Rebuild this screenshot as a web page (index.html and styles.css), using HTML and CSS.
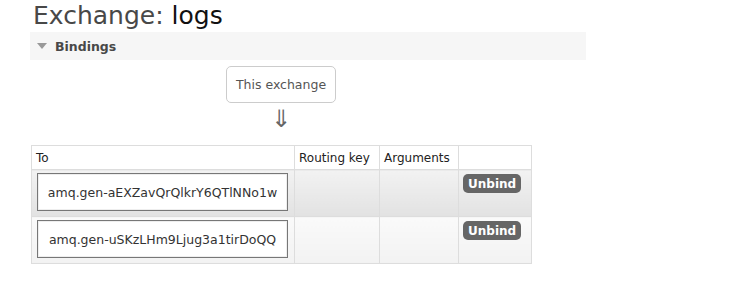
FILE: index.html
```html
<!DOCTYPE html>
<html>
<head>
<meta charset="utf-8">
<link rel="stylesheet" href="styles.css">
</head>
<body>
<div class="page">
  <h1 class="title">Exchange: <b>logs</b></h1>
  <div class="section">
    <div class="section-head"><span class="tri"></span>Bindings</div>
    <div class="section-body">
      <div class="source">
        <span class="this-ex">This exchange</span>
        <span class="arrow">⇓</span>
      </div>
      <table class="bindings">
        <colgroup>
          <col class="w-to"><col class="w-rk"><col class="w-args"><col class="w-act">
        </colgroup>
        <thead>
          <tr><th>To</th><th>Routing key</th><th>Arguments</th><th></th></tr>
        </thead>
        <tbody>
          <tr class="alt1">
            <td class="c-to"><span class="queue">amq.gen-aEXZavQrQlkrY6QTlNNo1w</span></td>
            <td></td><td></td>
            <td class="c-act"><span class="btn">Unbind</span></td>
          </tr>
          <tr class="alt2">
            <td class="c-to"><span class="queue">amq.gen-uSKzLHm9Ljug3a1tirDoQQ</span></td>
            <td></td><td></td>
            <td class="c-act"><span class="btn">Unbind</span></td>
          </tr>
        </tbody>
      </table>
    </div>
  </div>
</div>
</body>
</html>
```

FILE: styles.css
```css
html, body { margin: 0; padding: 0; background: #fff; }
body { font-family: Verdana, "DejaVu Sans", sans-serif; color: #484848; }
.page { padding: 0 0 0 30px; width: 556px; }
.title {
  margin: 0;
  padding: 2px 0 0 3px;
  height: 29px;
  font-size: 25px;
  font-weight: normal;
  line-height: 28px;
  color: #484848;
  white-space: nowrap;
}
.title b { font-weight: normal; color: #111; }
.section-head {
  height: 29px;
  background: #f6f6f6;
  display: flex;
  align-items: center;
  font-size: 12.5px;
  font-weight: bold;
  color: #484848;
  padding-left: 7px;
  border-top: 1px solid #fff;
  box-sizing: border-box;
}
.tri {
  width: 0; height: 0;
  border-left: 5px solid transparent;
  border-right: 5px solid transparent;
  border-top: 6px solid #999;
  margin-right: 8px;
}
.section-body { padding-top: 6px; }
.source {
  display: flex;
  flex-direction: column;
  align-items: center;
  width: 502px;
}
.this-ex {
  box-sizing: border-box;
  width: 110px;
  height: 37px;
  border: 1px solid #ccc;
  border-radius: 5px;
  font-size: 12.5px;
  color: #555;
  display: flex;
  align-items: center;
  justify-content: center;
}
.arrow {
  font-size: 24px;
  line-height: 32px;
  color: #666;
}
.bindings {
  margin-top: 10px;
  margin-left: 1px;
  border-collapse: collapse;
  table-layout: fixed;
  font-size: 12px;
  width: 500px;
}
.w-to { width: 263px; }
.w-rk { width: 85px; }
.w-args { width: 79px; }
.w-act { width: 73px; }
.bindings th, .bindings td {
  border: 1px solid #ddd;
  padding: 0;
}
.bindings th {
  text-align: left;
  font-weight: normal;
  color: #222;
  height: 23px;
  padding: 0 4px;
  background: #fff;
  white-space: nowrap;
}
.bindings td { height: 42px; vertical-align: top; }
.alt1 td { background: linear-gradient(#f2f2f2, #e2e2e2); }
.alt2 td { background: linear-gradient(#fafafa, #f2f2f2); }
.bindings td.c-to { padding: 3px 0 0 5px; }
.queue {
  box-sizing: border-box;
  display: flex;
  align-items: center;
  justify-content: center;
  width: 251px;
  height: 38px;
  border: 1px solid #777;
  box-shadow: inset 0 0 0 1px #eee;
  background: #fff;
  color: #333;
  font-size: 12.5px;
  white-space: nowrap;
}
.bindings td.c-act { padding: 4px 0 0 4px; }
.btn {
  display: inline-block;
  background: #666;
  color: #fff;
  font-weight: bold;
  font-size: 12px;
  border-radius: 5px;
  padding: 3px 5px 2px 5px;
  line-height: 14px;
}
```
